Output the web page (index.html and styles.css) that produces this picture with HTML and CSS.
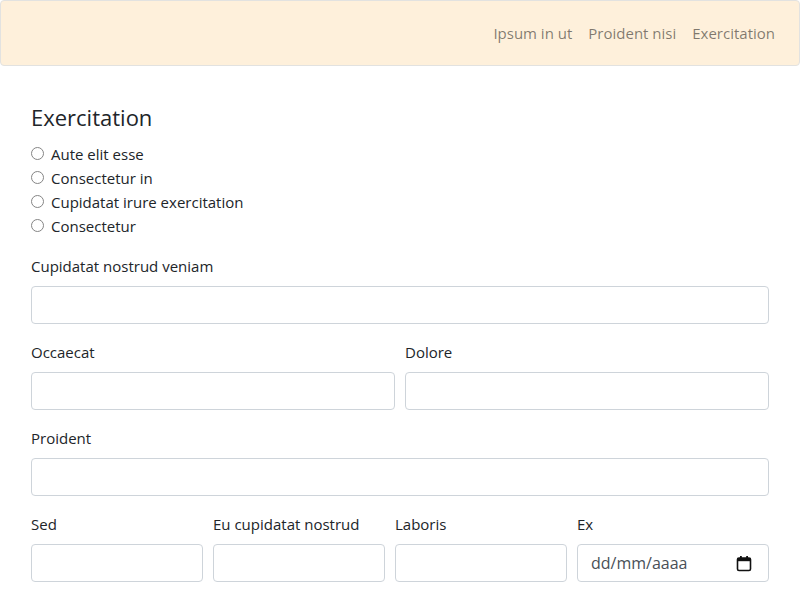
FILE: index.html
```html
<!DOCTYPE html>
<html lang="es">
<head>
<meta charset="utf-8">
<title>Form</title>
<link rel="stylesheet" href="styles.css">
</head>
<body>
<nav class="navbar">
  <ul class="nav">
    <li><a href="#" class="nav-link">Ipsum in ut</a></li>
    <li><a href="#" class="nav-link">Proident nisi</a></li>
    <li><a href="#" class="nav-link">Exercitation</a></li>
  </ul>
</nav>
<main class="content">
  <h4 class="title">Exercitation</h4>
  <div class="radios">
    <label class="radio"><input type="radio" name="opt"><span>Aute elit esse</span></label>
    <label class="radio"><input type="radio" name="opt"><span>Consectetur in</span></label>
    <label class="radio"><input type="radio" name="opt"><span>Cupidatat irure exercitation</span></label>
    <label class="radio"><input type="radio" name="opt"><span>Consectetur</span></label>
  </div>
  <div class="group">
    <label class="label">Cupidatat nostrud veniam</label>
    <input class="control" type="text">
  </div>
  <div class="row two">
    <div class="group">
      <label class="label">Occaecat</label>
      <input class="control" type="text">
    </div>
    <div class="group">
      <label class="label">Dolore</label>
      <input class="control" type="text">
    </div>
  </div>
  <div class="group">
    <label class="label">Proident</label>
    <input class="control" type="text">
  </div>
  <div class="row four">
    <div class="group">
      <label class="label">Sed</label>
      <input class="control" type="text">
    </div>
    <div class="group">
      <label class="label">Eu cupidatat nostrud</label>
      <input class="control" type="text">
    </div>
    <div class="group">
      <label class="label">Laboris</label>
      <input class="control" type="text">
    </div>
    <div class="group">
      <label class="label">Ex</label>
      <div class="control date">
        <input class="date-input" type="text" placeholder="dd/mm/aaaa">
        <svg class="cal" width="16" height="17" viewBox="0 0 16 17" aria-hidden="true">
          <rect x="1.5" y="3" width="13" height="12.5" rx="1.5" fill="none" stroke="#111" stroke-width="1.6"/>
          <rect x="1.5" y="3" width="13" height="3.2" fill="#111"/>
          <rect x="4" y="1" width="1.8" height="3" fill="#111"/>
          <rect x="10.2" y="1" width="1.8" height="3" fill="#111"/>
        </svg>
      </div>
    </div>
  </div>
</main>
</body>
</html>
```
FILE: styles.css
```css
* { box-sizing: border-box; }
body {
  margin: 0;
  font-family: "Open Sans", "Noto Sans", sans-serif;
  font-size: 15px;
  line-height: 24px;
  color: #212529;
  background: #fff;
}
.navbar {
  display: flex;
  justify-content: flex-end;
  align-items: center;
  padding: 8px 16px;
  background: #fef0db;
  border: 1px solid #e2e2e0;
  border-radius: 4px;
  height: 66px;
}
.nav {
  display: flex;
  list-style: none;
  margin: 0;
  padding: 0;
}
.nav-link {
  display: block;
  padding: 8px;
  color: rgba(0, 0, 0, 0.5);
  text-decoration: none;
}
.content {
  padding: 37px 31px 0;
}
.title {
  font-size: 22px;
  font-weight: 400;
  line-height: 29px;
  margin: 0 0 10px;
}
.radios {
  display: flex;
  flex-direction: column;
  margin-bottom: 16px;
}
.radio {
  display: flex;
  align-items: center;
  gap: 7px;
  height: 24px;
}
.radio input {
  appearance: none;
  -webkit-appearance: none;
  width: 13px;
  height: 13px;
  margin: 0 0 2px;
  border: 1px solid #858585;
  border-radius: 50%;
  background: #fff;
}
.group {
  display: flex;
  flex-direction: column;
  min-width: 0;
  margin-bottom: 16px;
}
.label {
  margin-bottom: 8px;
}
.control {
  height: 38px;
  width: 100%;
  padding: 6px 12px;
  font: inherit;
  color: #495057;
  background: #fff;
  border: 1px solid #ced4da;
  border-radius: 4px;
}
.row {
  display: grid;
  column-gap: 10px;
}
.two { grid-template-columns: minmax(0, 1fr) minmax(0, 1fr); }
.four { grid-template-columns: 172px 172px 172px minmax(0, 1fr); }
.date {
  display: flex;
  align-items: center;
  padding: 6px 16px 6px 13px;
}
.date-input {
  flex: 1;
  width: 0;
  min-width: 0;
  border: none;
  outline: none;
  padding: 0;
  font: inherit;
  font-size: 16px;
  color: #495057;
  background: transparent;
}
.date-input::placeholder { color: #495057; opacity: 1; }
.cal { flex: none; }
```
